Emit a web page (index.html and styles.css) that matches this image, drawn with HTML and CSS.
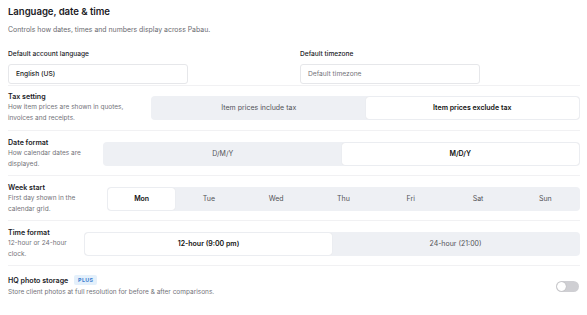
FILE: index.html
```html
<!DOCTYPE html>
<html lang="en">
<head>
<meta charset="UTF-8" />
<meta name="viewport" content="width=device-width, initial-scale=1" />
<title>Language, date &amp; time</title>
<link rel="stylesheet" href="styles.css">
</head>
<body>

<div class="panel">
  <h2 class="title">Language, date &amp; time</h2>
  <p class="subtitle">Controls how dates, times and numbers display across Pabau.</p>

  <div class="fields">
    <div class="field">
      <label class="field-label">Default account language</label>
      <div class="input">English (US)</div>
    </div>
    <div class="field">
      <label class="field-label">Default timezone</label>
      <div class="input placeholder">Default timezone</div>
    </div>
  </div>

  <div class="row">
    <div class="info info-tax">
      <div class="row-title">Tax setting</div>
      <div class="row-desc">How item prices are shown in quotes, invoices and receipts.</div>
    </div>
    <div class="segmented">
      <div class="seg">Item prices include tax</div>
      <div class="seg active">Item prices exclude tax</div>
    </div>
  </div>

  <div class="row">
    <div class="info info-date">
      <div class="row-title">Date format</div>
      <div class="row-desc">How calendar dates are displayed.</div>
    </div>
    <div class="segmented">
      <div class="seg">D/M/Y</div>
      <div class="seg active">M/D/Y</div>
    </div>
  </div>

  <div class="row">
    <div class="info info-week">
      <div class="row-title">Week start</div>
      <div class="row-desc">First day shown in the calendar grid.</div>
    </div>
    <div class="segmented">
      <div class="seg active">Mon</div>
      <div class="seg">Tue</div>
      <div class="seg">Wed</div>
      <div class="seg">Thu</div>
      <div class="seg">Fri</div>
      <div class="seg">Sat</div>
      <div class="seg">Sun</div>
    </div>
  </div>

  <div class="row">
    <div class="info info-time">
      <div class="row-title">Time format</div>
      <div class="row-desc">12-hour or 24-hour clock.</div>
    </div>
    <div class="segmented">
      <div class="seg active">12-hour (9:00 pm)</div>
      <div class="seg">24-hour (21:00)</div>
    </div>
  </div>

  <div class="row row-last">
    <div class="info">
      <div class="row-title">HQ photo storage <span class="badge">PLUS</span></div>
      <div class="row-desc">Store client photos at full resolution for before &amp; after comparisons.</div>
    </div>
    <div class="toggle"><span class="knob"></span></div>
  </div>
</div>

</body>
</html>
```

FILE: styles.css
```css
/* Reset */
* {
  margin: 0; padding: 0; box-sizing: border-box;
}
html, body {
  background: #fff;
  font-family: Inter, 'Noto Sans', sans-serif;
  color: #1b1b1f;
}
body {
  padding: 6px 8px 0 8px;
}
.panel {
  width: 572px;
}
.title {
  font-size: 9.6px;
  font-weight: 600;
  line-height: 12px;
  letter-spacing: -0.05px;
}
.subtitle {
  margin-top: 7px;
  font-size: 6.9px;
  line-height: 10px;
  color: #6a6a70;
}
.fields {
  display: flex;
  gap: 112px;
  margin-top: 14px;
  padding-bottom: 1px;
  border-bottom: 1px solid #f1f1f3;
}
.field {
  width: 180px;
}
.field-label {
  display: block;
  font-size: 6.6px;
  font-weight: 500;
  line-height: 10px;
  color: #222227;
}
.input {
  margin-top: 5px;
  height: 20px;
  border: 1px solid #e6e7ea;
  border-radius: 3px;
  padding: 0 7px;
  font-size: 6.7px;
  font-weight: 500;
  line-height: 18px;
  color: #222;
}
.input.placeholder {
  font-weight: 400;
  color: #74747a;
}
.row {
  display: flex;
  align-items: center;
  gap: 8px;
  padding: 5px 0 6px;
  border-bottom: 1px solid #f1f1f3;
}
.row + .row {
  padding-top: 6px;
  padding-bottom: 5px;
}
.row-last {
  border-bottom: none;
}
.row.row-last {
  padding-top: 9px;
}
.info {
  flex: 0 0 auto;
}
.info-tax { width: 135px; }
.info-date { width: 87px; }
.info-week { width: 91px; }
.info-time { width: 68px; }
.row-last .info {
  flex: 1;
}
.row-title {
  font-size: 7.1px;
  font-weight: 600;
  line-height: 11px;
  color: #1b1b1f;
}
.row-desc {
  font-size: 6.5px;
  line-height: 11px;
  color: #727278;
}
.row-last .row-desc {
  margin-top: 1px;
}
.segmented {
  flex: 1;
  display: flex;
  height: 24px;
  padding: 1px;
  background: #eef0f4;
  border-radius: 4px;
}
.seg {
  flex: 1;
  display: flex;
  align-items: center;
  justify-content: center;
  font-size: 7px;
  color: #525257;
  border-radius: 3px;
}
.seg.active {
  background: #fff;
  color: #111;
  font-weight: 600;
  box-shadow: 0 0 1px rgba(0, 0, 0, 0.12);
}
.badge {
  display: inline-block;
  margin-left: 4px;
  padding: 0 4px;
  height: 10px;
  line-height: 10px;
  font-size: 5.4px;
  font-weight: 700;
  letter-spacing: 0.3px;
  color: #3d7fd0;
  background: #e4f0fb;
  border-radius: 2px;
  vertical-align: 1px;
}
.toggle {
  position: relative;
  width: 23px;
  height: 11px;
  margin-right: 1px;
  border-radius: 6px;
  background: #cfcfd3;
}
.knob {
  position: absolute;
  top: 1px;
  left: 1px;
  width: 9px;
  height: 9px;
  border-radius: 50%;
  background: #fff;
  box-shadow: 0 0 1px rgba(0, 0, 0, 0.3);
}
```
